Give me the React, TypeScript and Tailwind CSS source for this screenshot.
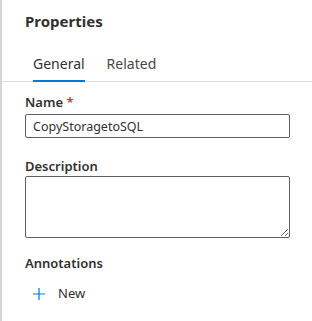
export default function App() {
  return (
    <div
      className="w-[312px] h-[321px] bg-white border-l-2 border-[#d6d6d6] text-[#323130]"
      style={{ fontFamily: '"Noto Sans", "Open Sans", sans-serif' }}
    >
      <div className="pl-[23px] pt-[11px]">
        <h2 className="text-[15px] font-bold leading-[20px]">Properties</h2>
      </div>

      <div className="flex gap-[22px] pl-[31px] mt-[23px] border-b border-[#e1dfdd]">
        <div className="pb-[7px] border-b-2 border-[#0078d4] text-[14px] leading-[19px] -mb-px">General</div>
        <div className="pb-[7px] text-[14px] leading-[19px] text-[#484644]">Related</div>
      </div>

      <div className="px-[23px] pt-[11px]">
        <label className="block text-[13px] font-semibold leading-[18px]">
          Name <span className="text-[#d13438]">*</span>
        </label>
        <input
          defaultValue="CopyStoragetoSQL"
          className="mt-[3px] w-[265px] h-[24px] border border-[#605e5c] rounded-[2px] px-[7px] text-[12.5px] outline-none"
        />

        <label className="block mt-[19px] text-[13px] font-semibold leading-[18px]">Description</label>
        <textarea className="mt-px block w-[265px] h-[62px] border border-[#605e5c] rounded-[2px] px-[7px] text-[13px] outline-none resize" />

        <label className="block mt-[16px] text-[13px] font-semibold leading-[18px]">Annotations</label>
        <button className="mt-[12px] ml-[8px] flex items-center gap-[13px] text-[13px]">
          <svg width="12" height="12" viewBox="0 0 12 12" className="text-[#0078d4]">
            <path d="M6 0v12M0 6h12" stroke="currentColor" strokeWidth="1.2" fill="none" />
          </svg>
          <span>New</span>
        </button>
      </div>
    </div>
  );
}
